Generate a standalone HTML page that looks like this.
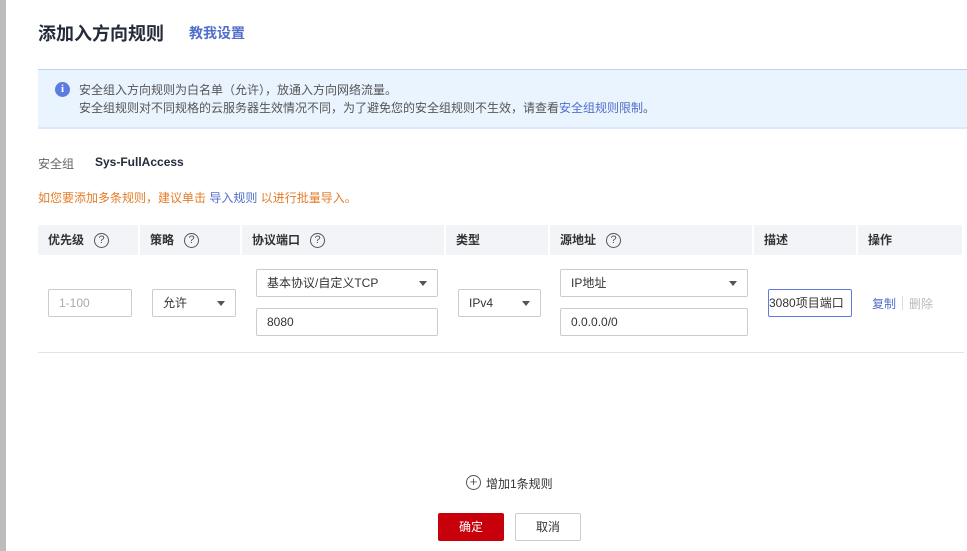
<!DOCTYPE html>
<html><head><meta charset="utf-8"><style>
*{box-sizing:border-box;margin:0;padding:0}
body{width:967px;height:551px;background:#fff;position:relative;overflow:hidden;font-family:"Liberation Sans","Noto Sans CJK SC",sans-serif;font-size:12px;color:#333}
.a{position:absolute;white-space:nowrap}
.box{position:absolute;border:1px solid #c9ccd3;border-radius:2px;background:#fff;height:28px;line-height:26px;padding-left:10px;font-size:12px;color:#333}
.caret{position:absolute;right:10px;top:11px;width:0;height:0;border-left:4px solid transparent;border-right:4px solid transparent;border-top:5px solid #555}
.q{display:inline-block;width:15px;height:15px;border:1.3px solid #555;border-radius:50%;text-align:center;line-height:12px;font-size:11px;color:#555;margin-left:10px;vertical-align:middle;font-weight:normal}
.th{position:absolute;top:225px;height:30px;background:#f2f4f8;line-height:30px;padding-left:10px;font-weight:bold;font-size:12px;color:#333}
</style></head><body>
<div class="a" style="left:0;top:0;width:6px;height:551px;background:#bcbcbc"></div>
<div class="a" style="left:38px;top:20px;font-size:18px;font-weight:bold;color:#252b3a">添加入方向规则</div>
<div class="a" style="left:189px;top:23px;font-size:14px;font-weight:bold;color:#526ecc">教我设置</div>
<div class="a" style="left:38px;top:69px;width:929px;height:60px;background:#eaf4fe;border-top:1px solid #bcd0f5;border-bottom:2px solid #dde9fb"></div>
<div class="a" style="left:55px;top:82px;width:15px;height:15px;border-radius:50%;background:#5e7ce0;color:#fff;font-weight:bold;font-size:11px;text-align:center;line-height:15px;font-family:'Liberation Serif',serif">i</div>
<div class="a" style="left:79px;top:81px;color:#555;line-height:18px">安全组入方向规则为白名单（允许），放通入方向网络流量。<br>安全组规则对不同规格的云服务器生效情况不同，为了避免您的安全组规则不生效，请查看<span style="color:#526ecc">安全组规则限制</span>。</div>
<div class="a" style="left:38px;top:155px;color:#666">安全组</div>
<div class="a" style="left:95px;top:155px;font-weight:bold;color:#252b3a">Sys-FullAccess</div>
<div class="a" style="left:38px;top:189px;color:#e37d29">如您要添加多条规则，建议单击 <span style="color:#526ecc">导入规则</span> 以进行批量导入。</div>

<div class="th" style="left:38px;width:100px">优先级<span class="q">?</span></div>
<div class="th" style="left:140px;width:100px">策略<span class="q">?</span></div>
<div class="th" style="left:242px;width:202px">协议端口<span class="q">?</span></div>
<div class="th" style="left:446px;width:102px">类型</div>
<div class="th" style="left:550px;width:202px">源地址<span class="q">?</span></div>
<div class="th" style="left:754px;width:102px">描述</div>
<div class="th" style="left:858px;width:104px">操作</div>
<div class="a" style="left:38px;top:352px;width:926px;height:1px;background:#e2e4ea"></div>

<div class="box" style="left:48px;top:289px;width:84px;color:#aaa">1-100</div>
<div class="box" style="left:152px;top:289px;width:84px">允许<span class="caret"></span></div>
<div class="box" style="left:256px;top:269px;width:182px">基本协议/自定义TCP<span class="caret"></span></div>
<div class="box" style="left:256px;top:308px;width:182px">8080</div>
<div class="box" style="left:458px;top:289px;width:83px">IPv4<span class="caret"></span></div>
<div class="box" style="left:560px;top:269px;width:188px">IP地址<span class="caret"></span></div>
<div class="box" style="left:560px;top:308px;width:188px">0.0.0.0/0</div>
<div class="box" style="left:768px;top:289px;width:84px;border-color:#5e7ce0;padding-left:0;overflow:hidden"><span style="margin-left:4px;display:inline-block;text-indent:-4px">3080项目端口</span></div>
<div class="a" style="left:872px;top:295px;color:#526ecc">复制</div>
<div class="a" style="left:902px;top:296px;width:1px;height:14px;background:#ddd"></div>
<div class="a" style="left:909px;top:295px;color:#bbb">删除</div>

<div class="a" style="left:466px;top:475px;width:15px;height:15px;border:1.3px solid #555;border-radius:50%;text-align:center;line-height:12px;font-size:13px;color:#555">+</div>
<div class="a" style="left:486px;top:475px;color:#333">增加1条规则</div>
<div class="a" style="left:438px;top:513px;width:66px;height:28px;background:#c7000b;border-radius:2px;color:#fff;text-align:center;line-height:28px">确定</div>
<div class="a" style="left:515px;top:513px;width:66px;height:28px;border:1px solid #c9ccd3;border-radius:2px;color:#333;text-align:center;line-height:26px">取消</div>
</body></html>
